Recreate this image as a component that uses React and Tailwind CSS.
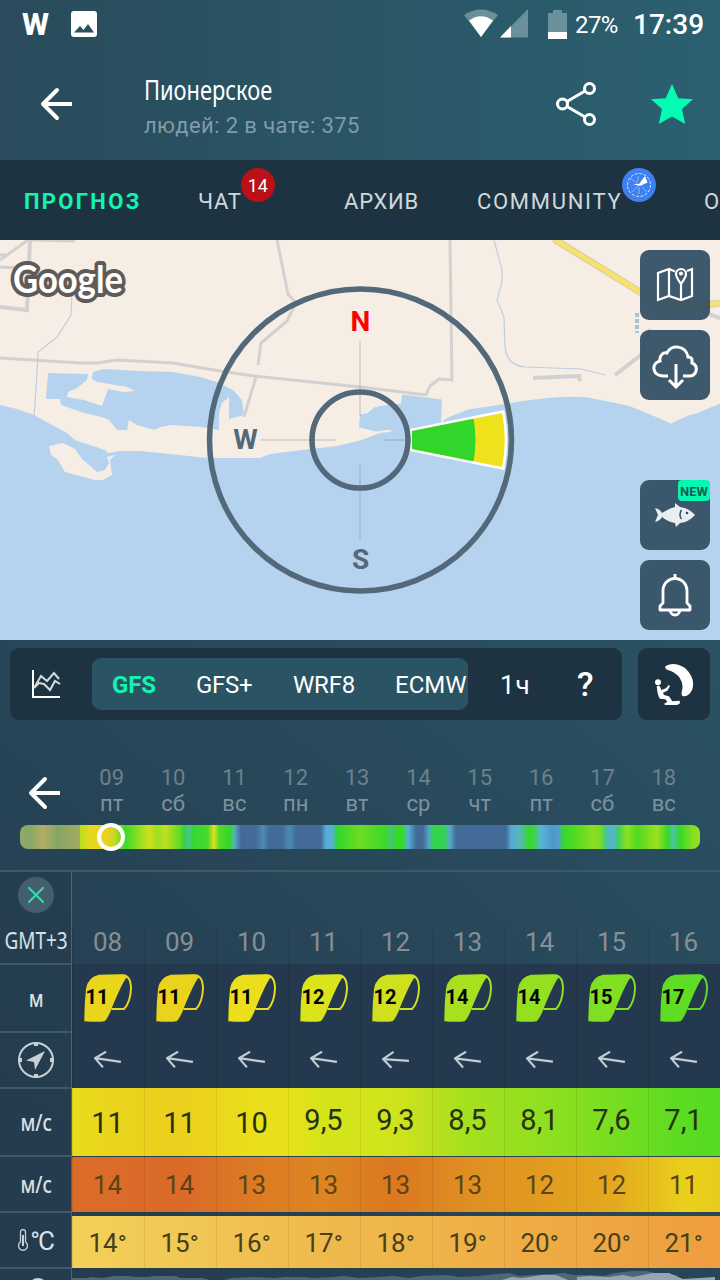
const TABS = [
	{ label: 'ПРОГНОЗ', style: 'w-[174px] tracking-[2.3px]', active: true },
	{ label: 'ЧАТ', style: 'w-[146px] tracking-[0.8px]', count: 14 },
	{ label: 'АРХИВ', style: 'w-[133px] tracking-[0.8px]' },
	{ label: 'COMMUNITY', style: 'w-[227px] tracking-[1.7px]', compass: true },
	{ label: 'О', style: 'w-[16px] tracking-[0px]' },
];

const DAYS = [
	['09', 'пт'],
	['10', 'сб'],
	['11', 'вс'],
	['12', 'пн'],
	['13', 'вт'],
	['14', 'ср'],
	['15', 'чт'],
	['16', 'пт'],
	['17', 'сб'],
	['18', 'вс'],
];

const HOURS = [
	{ hour: '08', kite: 11, color: '#ead51d', wind: '11', gust: '14', temp: 14, dir: 8 },
	{ hour: '09', kite: 11, color: '#ead31d', wind: '11', gust: '14', temp: 15, dir: 8 },
	{ hour: '10', kite: 11, color: '#ebdf1c', wind: '10', gust: '13', temp: 16, dir: 8 },
	{ hour: '11', kite: 12, color: '#dbe31c', wind: '9,5', gust: '13', temp: 17, dir: 8 },
	{ hour: '12', kite: 12, color: '#cee01e', wind: '9,3', gust: '13', temp: 18, dir: 4 },
	{ hour: '13', kite: 14, color: '#a8e020', wind: '8,5', gust: '13', temp: 19, dir: 7 },
	{ hour: '14', kite: 14, color: '#94e020', wind: '8,1', gust: '12', temp: 20, dir: 7 },
	{ hour: '15', kite: 15, color: '#7fdf22', wind: '7,6', gust: '12', temp: 20, dir: 8 },
	{ hour: '16', kite: 17, color: '#5fdd24', wind: '7,1', gust: '11', temp: 21, dir: 8 },
];

// [x, color] pairs, x is in pixels from the left side of the bar
const WEEK = [
	[0, '#95a868'], [10, '#86a868'], [23, '#b5ac62'], [37, '#84a762'], [52, '#99a862'], [60, '#a0ae60'],
	[60, '#b8de22'], [70, '#e6d91c'], [86, '#eed01e'], [95, '#c4da1e'], [105, '#3cd92b'], [113, '#6add24'],
	[122, '#a5df20'], [130, '#cde01c'], [137, '#a2df20'], [146, '#bde01e'], [160, '#62db24'], [164, '#38d040'],
	[168, '#49c490'], [173, '#33d833'], [188, '#4ad92a'], [194, '#e2df20'], [199, '#55db24'], [210, '#33d62f'],
	[214, '#52b8a8'], [217, '#4f92bb'], [221, '#436b98'], [236, '#436b98'], [243, '#4b8cb4'], [249, '#436b98'],
	[262, '#436b98'], [270, '#4b8cb4'], [276, '#436b98'], [301, '#436b98'], [306, '#57aed8'], [312, '#57aed8'],
	[318, '#2fd82d'], [340, '#6fdd22'], [353, '#4fdb22'], [366, '#3fd92d'], [371, '#45c57a'], [376, '#35d92a'],
	[383, '#35d92a'], [388, '#57b0d8'], [396, '#436b98'], [403, '#436b98'], [409, '#50a8c8'], [413, '#33d550'],
	[424, '#33d24a'], [430, '#57a8c8'], [436, '#436b98'], [486, '#436b98'], [491, '#57a8d8'], [502, '#55bba8'],
	[508, '#35d82a'], [515, '#40d050'], [521, '#57b5d8'], [533, '#4e98c8'], [539, '#50a0d0'], [543, '#35d82a'],
	[560, '#60db22'], [573, '#8ddf22'], [580, '#7ddd22'], [586, '#45c890'], [592, '#57b0dd'], [598, '#40cf60'],
	[607, '#8fe01e'], [617, '#50da22'], [637, '#9de01e'], [648, '#35d82a'], [653, '#4bc4a0'], [660, '#35d82a'],
	[673, '#88df20'], [680, '#95df20'],
];

const WIND = [
	[0, '#e9dc1b'], [36, '#ead61c'], [108, '#ebcf1d'], [180, '#ecde1b'], [216, '#e9e11a'], [252, '#d5e41b'],
	[324, '#d0e31c'], [372, '#b4e01e'], [396, '#a4e01e'], [468, '#92df20'], [540, '#78de20'], [612, '#5bdb22'],
	[648, '#58da22'],
];
const GUST = [
	[0, '#da6c28'], [108, '#da6a28'], [180, '#dc7a24'], [252, '#dd8522'], [324, '#db7820'], [396, '#df8f22'],
	[468, '#e19b20'], [540, '#e4a81f'], [576, '#e7bb1d'], [612, '#ead01b'], [648, '#e9cc1b'],
];
const TEMP = [
	[0, '#f3d05a'], [108, '#f1c855'], [252, '#efb94d'], [324, '#efb64b'], [468, '#efab45'], [648, '#ee9d3f'],
];

const gradient = (stops) => ({
	backgroundImage: `linear-gradient(90deg, ${stops.map(([x, c]) => `${c} ${x}px`).join(', ')})`,
});

function Arrow() {
	return (
		<svg width="34" height="34" viewBox="0 0 34 34" fill="none" stroke="#fff" strokeWidth="4">
			<path d="M33 17H3" />
			<path d="M18 3 4 17l14 14" strokeLinecap="round" strokeLinejoin="round" />
		</svg>
	);
}

function StatusBar() {
	return (
		<div className="flex h-12 items-center pr-[18px] pl-[22px] text-white">
			<span className="w-[49px] text-[31px] leading-none font-extrabold">W</span>
			<svg width="26" height="26" viewBox="0 0 26 26">
				<rect width="26" height="26" rx="3" fill="#fff" />
				<path d="M3 21.500 9 15l3.500 4L17 13l6 8.500z" fill="#28505f" />
			</svg>
			<svg className="ml-auto" width="64" height="30" viewBox="0 0 64 30">
				<path d="M0 6Q17-5 34 6L17 28z" fill="#6b8f9b" />
				<path d="M5 11.500Q17 3 29 11.500L17 28z" fill="#fff" />
				<path d="M64 0v28.500H36z" fill="#6b8f9b" />
				<path d="M47 17v11.500H36z" fill="#fff" />
			</svg>
			<svg className="ml-5" width="19" height="29" viewBox="0 0 19 29">
				<path d="M0 3h5V0h9v3h5v19H0z" fill="#6b8f9b" />
				<path d="M0 22h19v7H0z" fill="#fff" />
			</svg>
			<span className="mt-0.5 ml-2 w-[42px] text-[24px] whitespace-nowrap tracking-[-0.6px]">27%</span>
			<span className="mt-0.5 ml-4 w-[69px] text-[28px] font-medium whitespace-nowrap">17:39</span>
		</div>
	);
}

function Header() {
	return (
		<header className="h-40 bg-linear-to-r from-[#294b5b] to-[#2b6070]">
			<StatusBar />
			<div className="flex h-28 items-center pr-[27px] pl-[39px]">
				<Arrow />
				<div className="ml-[71px] w-[216px] pt-[7px]">
					<h1 className="h-[36px] origin-left scale-x-[0.78] font-['Noto_Sans'] text-[28px] leading-[29px] whitespace-nowrap text-white">
						Пионерское
					</h1>
					<p className="h-[30px] text-[22px] leading-[29px] tracking-[0.4px] whitespace-nowrap text-[#7f9ca8]">
						людей: 2 в чате: 375
					</p>
				</div>
				<svg
					className="ml-auto"
					width="42"
					height="46"
					viewBox="0 0 42 46"
					fill="none"
					stroke="#fff"
					strokeWidth="3"
				>
					<circle cx="7.500" cy="23" r="5" />
					<circle cx="34.500" cy="7.500" r="5" />
					<circle cx="34.500" cy="38.500" r="5" />
					<path d="m12 20.500 18-10.500M12 25.500 30 36" />
				</svg>
				<svg className="ml-[54px]" width="42" height="40" viewBox="0 0 42 40">
					<path
						d="m21 0 6.200 14.200L42 15.300 31 25l3.200 15L21 32.500 7.800 40 11 25 0 15.300l14.800-1.100z"
						fill="#05fcb2"
					/>
				</svg>
			</div>
		</header>
	);
}

function Tabs() {
	return (
		<nav className="flex h-20 items-center overflow-hidden bg-[#1e3341] pl-6 text-[22px] text-[#d0d8dd]">
			{TABS.map((tab) => (
				<div key={tab.label} className={`${tab.style} shrink-0 pt-[3px]`}>
					<span className="relative whitespace-nowrap">
						<span className={tab.active ? 'font-bold text-[#12f5b0]' : ''}>{tab.label}</span>
						{tab.count && (
							<span className="absolute -top-[21px] -right-[33px] flex size-[34px] items-center justify-center rounded-full bg-[#b91116] text-[18px] tracking-normal text-white">
								{tab.count}
							</span>
						)}
						{tab.compass && (
							<svg className="absolute -top-[21px] -right-[34px]" width="34" height="34" viewBox="0 0 34 34">
								<circle cx="17" cy="17" r="17" fill="#3f80f0" />
								<circle cx="17" cy="17" r="11.500" fill="none" stroke="#d5e4ff" strokeDasharray="3 1.500" />
								<path d="M8 10l8 6M10 24l6-6M17 19v7M20 19l5 5M16 8v6" stroke="#8db4f8" />
								<path d="m11 16 6 0 6-8 2.500 6.500L18 18z" fill="#fff" />
							</svg>
						)}
					</span>
				</div>
			))}
		</nav>
	);
}

function Map() {
	return (
		<svg className="block" width="720" height="400" viewBox="0 0 720 400">
			<rect width="720" height="400" fill="#f6eee5" />
			<g fill="none" stroke="#d2d1cf" strokeWidth="3">
				<path d="M30 0 27 70 0 67" strokeWidth="4" />
				<path d="M28 0 0 20M0 15h7M0 27l17 1M31 0l44 1" />
				<path d="M0 118l80 5 17 0 20-3 56 3 47 8 34 5 106 11 66 8 4-9 9-7 13 1L450 0" />
				<path d="m256 137-12 40M258 125l3-22 26-22 9-18-8-9L277 0" />
				<path d="M533 138l46-2 1 5M615 135l26-20 9-26M706 73l14 5" strokeWidth="4" />
			</g>
			<path
				d="M72 54 71 75 57 97 38 112 36 150 34 176M494 0l8 30 0 12-5 18 7 17 1 31q3 18 20 19l56 2 24 6"
				fill="none"
				stroke="#bccfe2"
				strokeWidth="1.200"
			/>
			<path d="M554-1 640 52q35 20 80 11" fill="none" stroke="#cfcabc" strokeWidth="7" />
			<path d="M554-1 640 52q35 20 80 11" fill="none" stroke="#f8e26b" strokeWidth="5" />
			<path d="M637 73v20" stroke="#a9c3d2" strokeWidth="4" strokeDasharray="4 2" />
			<g fill="#b5d3ef">
				<path d="M0 165l17 4 17 6 18 10 15 8 8 7 15 5 15 5 3 3 12-2 20 0 30 3 37 4 53 0 10-4 40-5 27-3 23-5.500 20-7.500 12-1.500-2-2-14 2-8-2-9-2 1-13 7-1 7-6 9-2 18-2 1-9 40 5-1 23 7-5 20-8 40-6q50-9 80-6l40 8 20 8 23 10 17-8 20-5 13-6V400H0z" />
				<path d="M48 133l40 1-1 6-10 8-9 4-1 5 17 3 18 6 6-17 15 3 12-1-8-4-17-3-13-2-5-3 1-7 10-3 37 2 33 1 27 5 17 5 16 8 9 10 2 15-15 4 0-22-7 6-3 10 0 17-18-3-30-2-10 2-7 3-17-5-8-5-2 10-10 0-8-10-8-3-20-5-20-7-1-6-14 0z" />
				<path d="M700 172 721 163V400H700z" />
			</g>
			<path
				d="M49 206l14-3 12 6 7 10 15 13 8-2 4-7-2-6 8-2-5 5 2 15-9 5-8 0-15-4-15-4-7-12-7-5z"
				fill="#f6eee5"
			/>
			<g fill="none" stroke="#63737f" strokeOpacity=".4">
				<path d="M360 101v75M261 200h75M384 200h24M360 224v75" />
			</g>
			<path
				d="M410.500 190.100 503.200 171.500A146 146 0 0 1 503.200 228.500L410.500 209.900z"
				fill="#efe11b"
				stroke="#fff"
				strokeWidth="2.500"
			/>
			<path d="M412 191 473.500 178.700Q477.500 200 473.500 221.300L412 209z" fill="#30d62a" />
			<circle cx="360.500" cy="200" r="151" fill="none" stroke="#536878" strokeWidth="5.500" />
			<circle cx="360" cy="200" r="48" fill="none" stroke="#536878" strokeWidth="5.500" />
			<g fontFamily="Roboto, sans-serif" fontWeight="700" fontSize="28" textAnchor="middle" fill="#536878">
				<text x="360.500" y="91" fill="#fe0000">
					N
				</text>
				<text x="245.500" y="209">
					W
				</text>
				<text x="360.500" y="328.500">
					S
				</text>
			</g>
			<text
				x="13"
				y="53"
				fontFamily="Lato, sans-serif"
				fontSize="38"
				fontWeight="700"
				textLength="110"
				lengthAdjust="spacingAndGlyphs"
				fill="#fff"
				stroke="#5f5b58"
				strokeWidth="8"
				strokeLinejoin="round"
				paintOrder="stroke"
			>
				Google
			</text>
		</svg>
	);
}

function MapButton({ children }) {
	return (
		<div className="relative flex size-[70px] items-center justify-center rounded-[9px] bg-[#345064]/95">{children}</div>
	);
}

function MapPanel() {
	return (
		<section className="relative h-[400px]">
			<Map />
			<div className="absolute top-[10px] right-[10px] flex flex-col gap-[10px]">
				<MapButton>
					<svg width="38" height="36" viewBox="0 0 38 36" fill="none" stroke="#fff" strokeWidth="2.200">
						<path d="M19 4.500 13 2 2 6v27l11-4 12 4 11-4V2l-5 2M13 2v27M25 18v15" />
						<path d="M25 17q-5-7-5-10a5 5 0 0 1 10 0q0 3-5 10z" />
						<circle cx="25" cy="6.500" r="1" fill="#fff" />
					</svg>
				</MapButton>
				<MapButton>
					<svg width="48" height="48" viewBox="0 0 48 48" fill="none" stroke="#fff" strokeWidth="3">
						<path
							d="M17 34h-5C1 34 0 21 9 19 8 14 12 10 16 11c4-9 19-8 21 4 5 0 4 4 4 6 7 3 5 13-3 13h-6"
							transform="translate(0 1)"
						/>
						<path d="M25 23v22M18 39l7 7 7-7" />
					</svg>
				</MapButton>
			</div>
			<div className="absolute right-[10px] bottom-[10px] flex flex-col gap-[10px]">
				<MapButton>
					<span className="absolute top-0 right-0 flex h-[21px] w-8 items-center justify-center rounded-[4px] bg-[#05f7b2] pt-0.5 text-[13px] font-bold text-[#1c5a57]">
						NEW
					</span>
					<svg width="40" height="24" viewBox="0 0 40 24">
						<path
							d="M0 5q5 1 7 5 6-4 13-6l0-4 5 4q9 1 15 8-6 7-15 8l-4 4-1-4Q13 19 7 14q-2 4-7 5l3-7z"
							fill="#e9eef1"
						/>
						<path d="M26.500 7q-3 5 0 9" fill="none" stroke="#345064" strokeWidth="1.500" />
						<circle cx="32" cy="10" r="1.300" fill="#345064" />
					</svg>
				</MapButton>
				<MapButton>
					<svg width="34" height="44" viewBox="0 0 34 44" fill="none" stroke="#fff" strokeWidth="2.800">
						<path d="M17 1v5M5 30V17.500a12 12 0 0 1 24 0V30l3 3v4H2v-4z" strokeLinejoin="round" />
						<path d="M12 37q1 5 5 5t5-5" />
					</svg>
				</MapButton>
			</div>
		</section>
	);
}

function Toolbar() {
	return (
		<div className="flex gap-4 px-[10px] pt-2 text-[24px] text-white">
			<div className="flex h-[72px] w-[612px] items-center rounded-[9px] bg-[#1e3341]">
				<svg
					className="mr-[31px] ml-[21px] shrink-0"
					width="30"
					height="30"
					viewBox="0 0 30 30"
					fill="none"
					stroke="#fff"
					strokeWidth="2"
				>
					<path d="M2 1v27h27" />
					<path d="m3 19 7-12 6 5 7-8 5 6M3 19l5-5 5 1 6 6 5-9 5 3" stroke="#d5dce0" />
				</svg>
				<div className="flex h-[52px] w-[376px] shrink-0 items-center rounded-[9px] bg-[#2a5364] pt-0.5 pl-5 whitespace-nowrap">
					<span className="w-[84px] shrink-0 font-bold tracking-[-0.2px] text-[#12f5b0]">GFS</span>
					<span className="w-[97px] shrink-0 tracking-[-0.3px]">GFS+</span>
					<span className="w-[102px] shrink-0 tracking-[-0.2px]">WRF8</span>
					<span className="w-[73px] shrink-0">ECMW</span>
				</div>
				<span className="mt-0.5 ml-8 w-[77px] text-[26px] tracking-[0.8px]">1ч</span>
				<span className="text-[34px] leading-none font-medium">?</span>
			</div>
			<div className="flex size-[72px] items-center justify-center rounded-[9px] bg-[#1e3341]">
				<svg width="39" height="41" viewBox="0 0 117 123" fill="#fff">
					<path d="M32 6Q58-8 90 12 122 42 112 76 104 96 88 97 78 98 80 84 88 60 72 38 56 22 36 17 28 12 32 6z" />
					<circle cx="9" cy="55" r="9" />
					<path d="M5 67q8-4 11 3l3 8 14-5 8-10 4 3-8 14-13 6 3 7 15 4 10 15 22-2 1 8-12 7-28 1-8-6 10-7-6-7-16-2Q8 98 5 67z" />
				</svg>
			</div>
		</div>
	);
}

function WeekBar() {
	return (
		<div className="mt-[45px] h-[105px]">
			<div className="flex h-[60px] items-start">
				<div className="mt-[11px] ml-[27px] w-[54px]">
					<Arrow />
				</div>
				{DAYS.map(([day, name]) => (
					<div key={day} className="w-[61.350px] text-center text-[22px] leading-[26px]">
						<div className="text-[#6b818d]">{day}</div>
						<div className="text-[#7d929e]">{name}</div>
					</div>
				))}
			</div>
			<div className="relative mx-5 h-6 rounded-lg" style={gradient(WEEK)}>
				<div className="absolute -top-[2px] left-[77px] size-7 rounded-full border-4 border-white" />
			</div>
		</div>
	);
}

function Kite({ color, size }) {
	return (
		<svg className="absolute top-[10px] left-[11px]" width="48" height="48" viewBox="0 0 144 144">
			<path d="M1 142Q1 90 6 45 12 8 45 2L105 1Q125 1 132 8 122 8 85 98 74 130 62 142 40 145 1 142z" fill={color} />
			<path d="M110 4Q141 0 141 45 139 85 120 105L82 105" fill="none" stroke={color} strokeWidth="6" />
			<text x="39" y="90" fontFamily="Roboto, sans-serif" fontSize="60" fontWeight="700" textAnchor="middle">
				{size}
			</text>
		</svg>
	);
}

function Cells({ className, children }) {
	return (
		<div className={`grid grid-cols-9 text-center ${className}`}>
			{HOURS.map((h) => (
				<div key={h.hour} className="relative border-l border-black/8 pr-[2px]">
					{children(h)}
				</div>
			))}
		</div>
	);
}

function ColorRow({ stops, className, children }) {
	return (
		<div style={gradient(stops)}>
			<Cells className={className}>{children}</Cells>
		</div>
	);
}

function Labels() {
	return (
		<div className="w-[72px] shrink-0 border-r border-[#4a6473] bg-[#243c4c]/60 font-['Noto_Sans'] text-[23px] text-[#d9e1e6]">
			<div className="flex h-[93px] flex-col items-center border-b-2 border-[#3f5968] pt-[5px] pl-px">
				<svg width="36" height="36" viewBox="0 0 36 36">
					<circle cx="18" cy="18" r="18" fill="#455e6d" />
					<path d="m11 11 14 14M25 11 11 25" stroke="#2fe0ac" strokeWidth="2" strokeLinecap="round" />
				</svg>
				<span className="mt-[9px] scale-x-[0.79] text-[24px] leading-9 whitespace-nowrap">GMT+3</span>
			</div>
			<div className="flex h-[68px] items-center justify-center border-b-2 border-[#3f5968] pl-px">
				<span className="scale-x-[0.82] font-medium">м</span>
			</div>
			<div className="flex h-14 items-center justify-center border-b-2 border-[#3f5968] pl-px">
				<svg width="38" height="38" viewBox="0 0 38 38">
					<circle cx="19" cy="19" r="17" fill="none" stroke="#c6d0d7" strokeWidth="2" />
					<path d="M17 1h4v4h-4zM17 33h4v4h-4zM1 17h4v4H1zM33 17h4v4h-4z" fill="#c6d0d7" />
					<path d="M28 10 9 19.500l8 1.500 1 8z" fill="#c6d0d7" />
				</svg>
			</div>
			<div className="flex h-[68px] items-center justify-center border-b-2 border-[#3f5968] pl-px">
				<span className="scale-x-[0.82] font-medium">м/с</span>
			</div>
			<div className="flex h-14 items-center justify-center border-b-2 border-[#3f5968] pl-px">
				<span className="scale-x-[0.82] font-medium">м/с</span>
			</div>
			<div className="flex h-14 items-center justify-center gap-[2px] border-b-2 border-[#3f5968]">
				<svg width="10" height="22" viewBox="0 0 10 22" fill="none" stroke="#c6d0d7" strokeWidth="1.300">
					<path d="M2.500 13V3a2.500 2.500 0 0 1 5 0v10a4.500 4.500 0 1 1-5 0z" />
					<path d="M5 6v11" strokeWidth="2" />
				</svg>
				<span className="pt-0.5 font-[Roboto] text-[26px] tracking-[-2px]">°C</span>
			</div>
			<div className="flex justify-center pt-[9px] pl-[5px]">
				<div className="size-5 rounded-full bg-[#c6d0d7]" />
			</div>
		</div>
	);
}

function Forecast() {
	return (
		<div className="flex border-t-2 border-[#3f5968]">
			<Labels />
			<div className="w-[648px]">
				<Cells className="h-[92px] pt-[54px] text-[26px] leading-8 text-[#858f97]">{(h) => h.hour}</Cells>
				<div className="bg-[#24394d]">
					<Cells className="h-[68px]">{(h) => <Kite color={h.color} size={h.kite} />}</Cells>
					<Cells className="h-14">
						{(h) => (
							<svg className="mx-auto mt-4" width="28" height="24" viewBox="0 0 28 24">
								<path
									d="M1 12h26M11 4 1 12l9 8"
									fill="none"
									stroke="#c2ccd4"
									strokeWidth="2.200"
									transform={`rotate(${h.dir} 14 12)`}
								/>
							</svg>
						)}
					</Cells>
				</div>
				<ColorRow stops={WIND} className="h-[68px] text-[29px] text-[#26310f]">
					{(h) => <div className={h.wind.includes(',') ? 'leading-[64px]' : 'leading-[70px]'}>{h.wind}</div>}
				</ColorRow>
				<ColorRow stops={GUST} className="mt-px h-[55px] text-[26px] leading-[57px] text-[#5a4415]">
					{(h) => h.gust}
				</ColorRow>
				<ColorRow stops={TEMP} className="mt-1 h-[52px] text-[26px] leading-[54px] text-[#45411a]">
					{(h) => (
						<>
							{h.temp}
							<span className="text-[24px]">°</span>
						</>
					)}
				</ColorRow>
				<svg width="648" height="12" viewBox="0 0 648 12">
					<path
						d="M0 10l14 0 6-1 10 1 12-2 14 0 8 1 12 0 6-1 22 0 4 2 22 0 8 2 14 0 8-2 22-1 20 1 12-1 18 0 9 1 19-1 12-1 15 2 20-1 14-1 16 2 12-2 26-1 12 2 20-1 18-2 12-1 10 3 12-1 20-1 14-1 8 2 18 0 12 1 12-3 18-2 14 0 14 4 16 0v8H0z"
						fill="#4f6878"
					/>
					<path d="M430 12l10-3 10 1 20-3 14 0 12 5zM505 9l12-1 20 1 14-2 10 2 20-4 16 0 14 6 32-2v4H505z" fill="#97a5b0" />
				</svg>
			</div>
		</div>
	);
}

export default function App() {
	return (
		<div className="h-[1280px] w-[720px] overflow-hidden bg-[#24394c] font-[Roboto,sans-serif]">
			<Header />
			<Tabs />
			<MapPanel />
			<main className="h-[640px] bg-linear-to-bl from-[#2a5263] to-[#243a4d]">
				<Toolbar />
				<WeekBar />
				<Forecast />
			</main>
		</div>
	);
}
